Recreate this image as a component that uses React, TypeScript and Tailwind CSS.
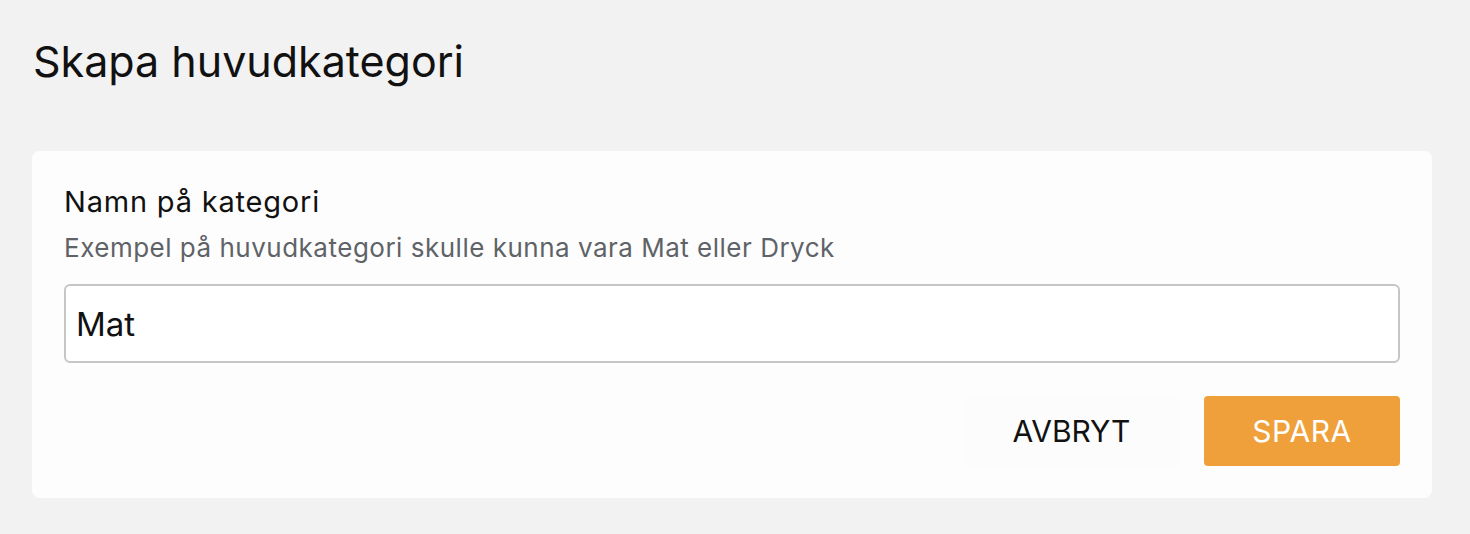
import React from 'react';

export default function App() {
  return (
    <div className="min-h-[534px] w-full bg-[#f2f2f2] pl-[32px] pr-[38px] pt-[30px] font-['Inter',sans-serif]">
      <h1 className="pl-px text-[43px] leading-[62px] text-[#111]">Skapa huvudkategori</h1>

      <div className="mt-[59px] rounded-[8px] bg-[#fdfdfd] px-[32px] pt-[32px] pb-[32px]">
        <label className="block text-[29px] leading-[38px] tracking-[0.8px] text-[#111]">Namn på kategori</label>
        <p className="mt-[10px] text-[26px] leading-[34px] tracking-[0.5px] text-[#5f6368]">
          Exempel på huvudkategori skulle kunna vara Mat eller Dryck
        </p>
        <input
          defaultValue="Mat"
          className="mt-[19px] block h-[79px] w-full rounded-[6px] border-2 border-[#c6c6c6] bg-white px-[10px] text-[33px] text-[#111] outline-none"
        />
        <div className="mt-[33px] flex justify-end gap-[24px]">
          <button className="h-[70px] w-[217px] bg-[#fcfcfc] text-[30px] text-[#111]">AVBRYT</button>
          <button className="h-[70px] w-[196px] rounded-[4px] bg-[#f0a03a] text-[30px] tracking-[0.5px] text-white">SPARA</button>
        </div>
      </div>
    </div>
  );
}
